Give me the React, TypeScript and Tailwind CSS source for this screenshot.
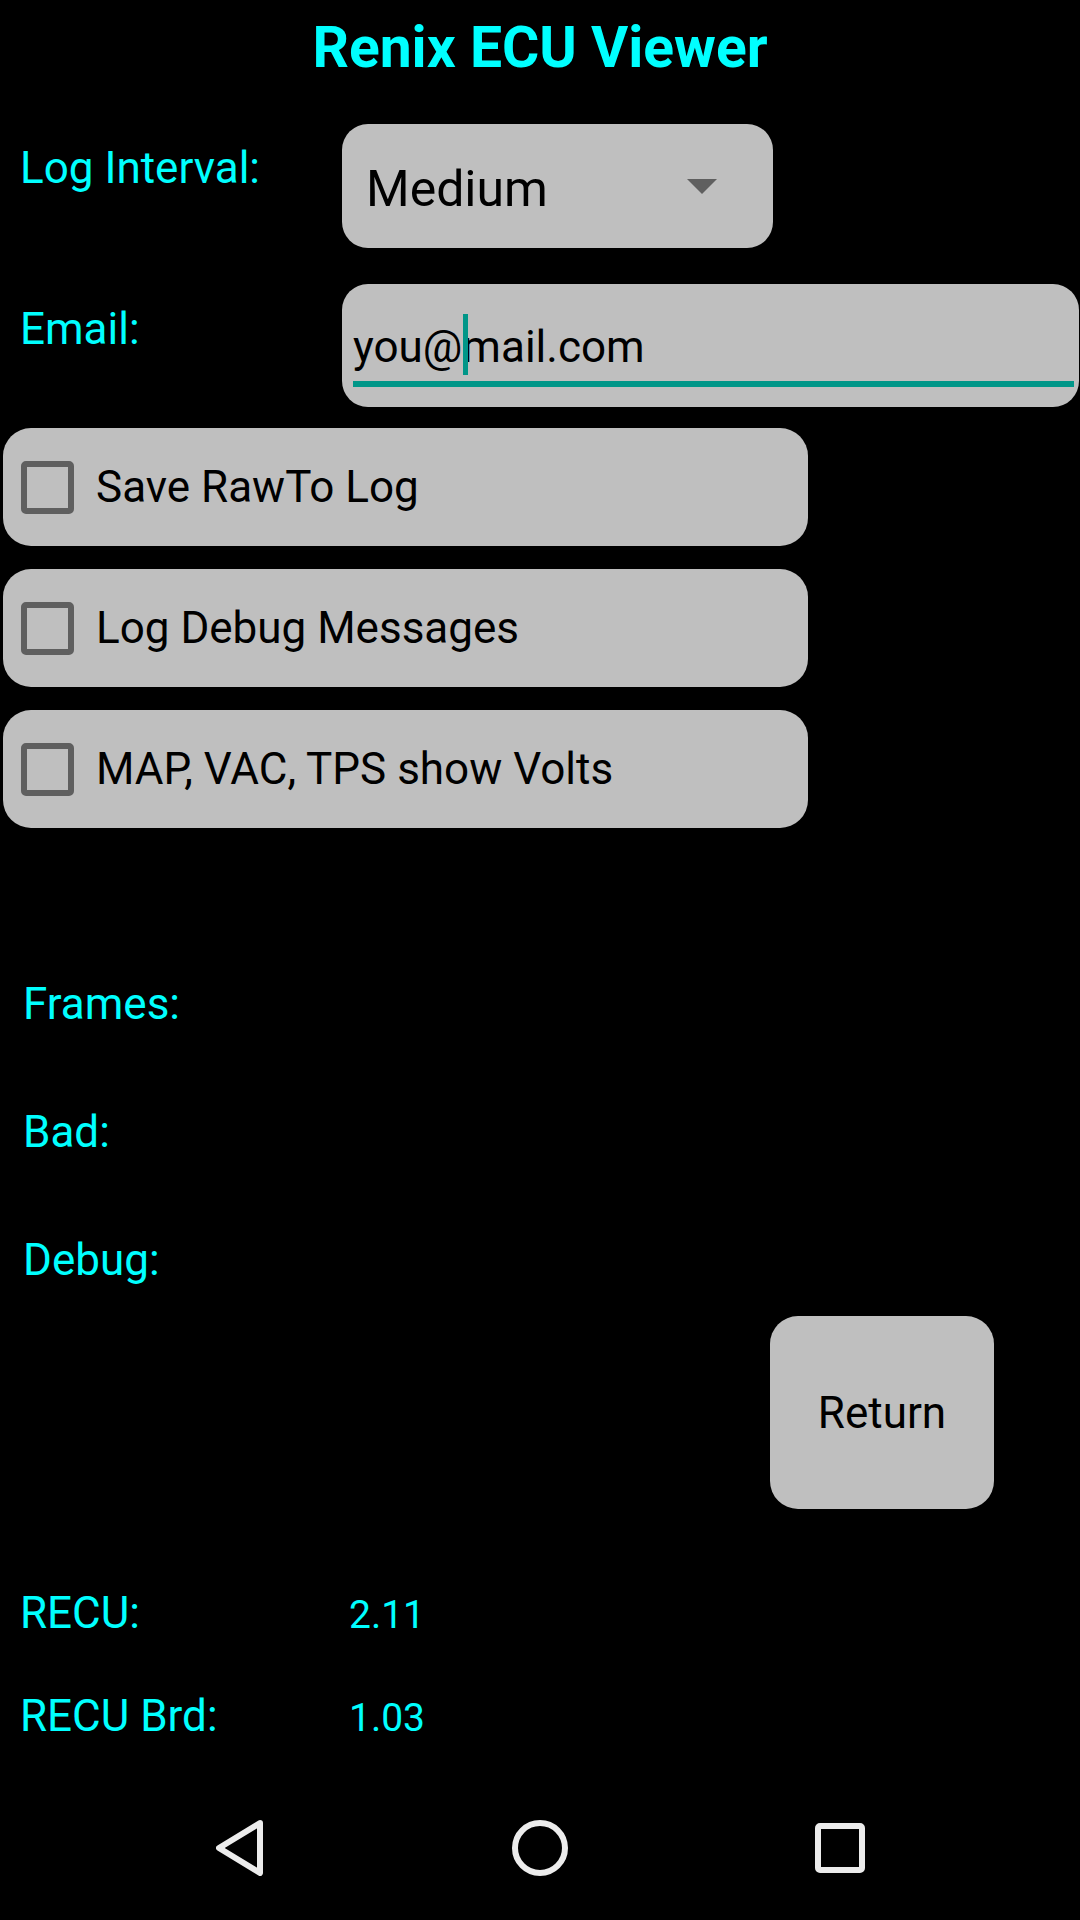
import React from 'react';

const CheckRow = ({ label }: { label: string }) => (
  <div className="flex items-center h-[118px] w-[805px] ml-[3px] rounded-[28px] bg-[#bfbfbf] pl-[18px]">
    <div className="w-[53px] h-[53px] border-[6px] border-[#5f5f5f] rounded-[5px] shrink-0" />
    <span className="ml-[22px] text-[44px] leading-none text-black">{label}</span>
  </div>
);

const StatLabel = ({ text, className }: { text: string; className: string }) => (
  <div className={`pl-[23px] h-[44px] text-[44px] leading-none text-[#00ffff] ${className}`}>{text}</div>
);

const NavBar = () => (
  <div className="mt-auto h-[126px] pb-[18px] flex items-center justify-center">
    <div className="w-[300px] flex justify-center">
      {/* back */}
      <svg width="48" height="56" viewBox="0 0 48 56">
        <path d="M44 3 L3 28 L44 53 Z" fill="none" stroke="#ececec" strokeWidth="6" strokeLinejoin="round" />
      </svg>
    </div>
    <div className="w-[300px] flex justify-center">
      {/* home */}
      <svg width="58" height="58" viewBox="0 0 58 58">
        <circle cx="29" cy="29" r="25" fill="none" stroke="#ececec" strokeWidth="6" />
      </svg>
    </div>
    <div className="w-[300px] flex justify-center">
      {/* recents */}
      <svg width="50" height="50" viewBox="0 0 50 50">
        <rect x="3" y="3" width="44" height="44" rx="2" fill="none" stroke="#ececec" strokeWidth="6" />
      </svg>
    </div>
  </div>
);

export default function App() {
  return (
    <div className="w-[1080px] h-[1920px] bg-black flex flex-col font-[Roboto,sans-serif] overflow-hidden">
      {/* Title */}
      <div className="pt-[15px] text-center text-[57px] leading-[66px] font-bold text-[#00ffff]">
        Renix ECU Viewer
      </div>

      {/* Log interval */}
      <div className="mt-[43px] flex pl-[20px]">
        <div className="w-[322px] pt-[22px] text-[44px] leading-none text-[#00ffff]">Log Interval:</div>
        <div className="flex items-center justify-between w-[431px] h-[124px] rounded-[26px] bg-[#bfbfbf] pl-[24px] pr-[56px]">
          <span className="mt-[6px] text-[50px] leading-none text-black">Medium</span>
          <svg width="30" height="15" viewBox="0 0 30 15">
            <polygon points="0,0 30,0 15,15" fill="#5f5f5f" />
          </svg>
        </div>
      </div>

      {/* Email */}
      <div className="mt-[36px] flex pl-[20px]">
        <div className="w-[322px] pt-[23px] text-[44px] leading-none text-[#00ffff]">Email:</div>
        <div className="w-[737px] h-[123px] rounded-[26px] bg-[#bfbfbf]">
          <div className="pl-[11px] pt-[41px] text-[44px] leading-none text-black whitespace-nowrap">
            you@
            <span className="relative inline-block w-0 h-[44px] align-top">
              <span className="absolute left-[1px] top-[-11px] w-[5px] h-[61px] bg-[#009688]" />
            </span>
            mail.com
          </div>
          <div className="mt-[12px] ml-[11px] w-[721px] h-[6px] bg-[#009688]" />
        </div>
      </div>

      {/* Checkboxes */}
      <div className="mt-[21px] flex flex-col gap-[23px]">
        <CheckRow label="Save RawTo Log" />
        <CheckRow label="Log Debug Messages" />
        <CheckRow label="MAP, VAC, TPS show Volts" />
      </div>

      {/* Stats */}
      <StatLabel text="Frames:" className="mt-[154px]" />
      <StatLabel text="Bad:" className="mt-[84px]" />
      <StatLabel text="Debug:" className="mt-[84px]" />

      {/* Return */}
      <div className="mt-[34px] flex justify-end pr-[86px]">
        <button className="w-[224px] h-[193px] rounded-[28px] bg-[#bfbfbf] text-[44px] leading-none text-black flex items-center justify-center">
          Return
        </button>
      </div>

      {/* Versions */}
      <div className="mt-[82px] flex items-baseline pl-[20px] text-[#00ffff]">
        <span className="w-[329px] text-[44px] leading-none">RECU:</span>
        <span className="text-[39px] leading-none">2.11</span>
      </div>
      <div className="mt-[59px] flex items-baseline pl-[20px] text-[#00ffff]">
        <span className="w-[329px] text-[44px] leading-none">RECU Brd:</span>
        <span className="text-[39px] leading-none">1.03</span>
      </div>

      <NavBar />
    </div>
  );
}
